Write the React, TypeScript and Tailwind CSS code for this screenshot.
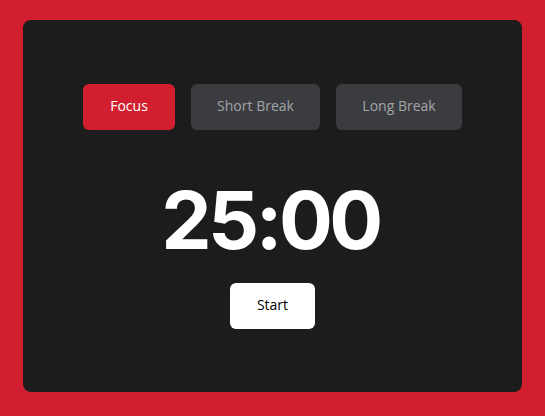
import React from "react";

export default function App() {
  return (
    <div className="min-h-[416px] w-full bg-[#d11f2f] pt-5 pb-6">
      <div className="mx-auto flex h-[372px] w-[499px] flex-col items-center rounded-lg bg-[#1c1c1c] pt-16">
        <div className="flex gap-4 font-['Open_Sans',sans-serif] text-[14px] leading-none">
          <button className="h-[46px] w-[92px] rounded-md bg-[#d11f2f] pb-[2px] text-white">Focus</button>
          <button className="h-[46px] w-[129px] rounded-md bg-[#3b3c40] pb-[2px] text-[#a3a4a8]">Short Break</button>
          <button className="h-[46px] w-[126px] rounded-md bg-[#3b3c40] pb-[2px] text-[#a3a4a8]">Long Break</button>
        </div>
        <div className="ml-[-4px] mt-[50px] font-['Inter',sans-serif] text-[80px] font-bold leading-none tracking-[-3.5px] text-white">25:00</div>
        <button className="mt-[23px] h-[46px] w-[85px] rounded-md bg-white pb-[2px] font-['Open_Sans',sans-serif] text-[14px] leading-none text-black">
          Start
        </button>
      </div>
    </div>
  );
}
